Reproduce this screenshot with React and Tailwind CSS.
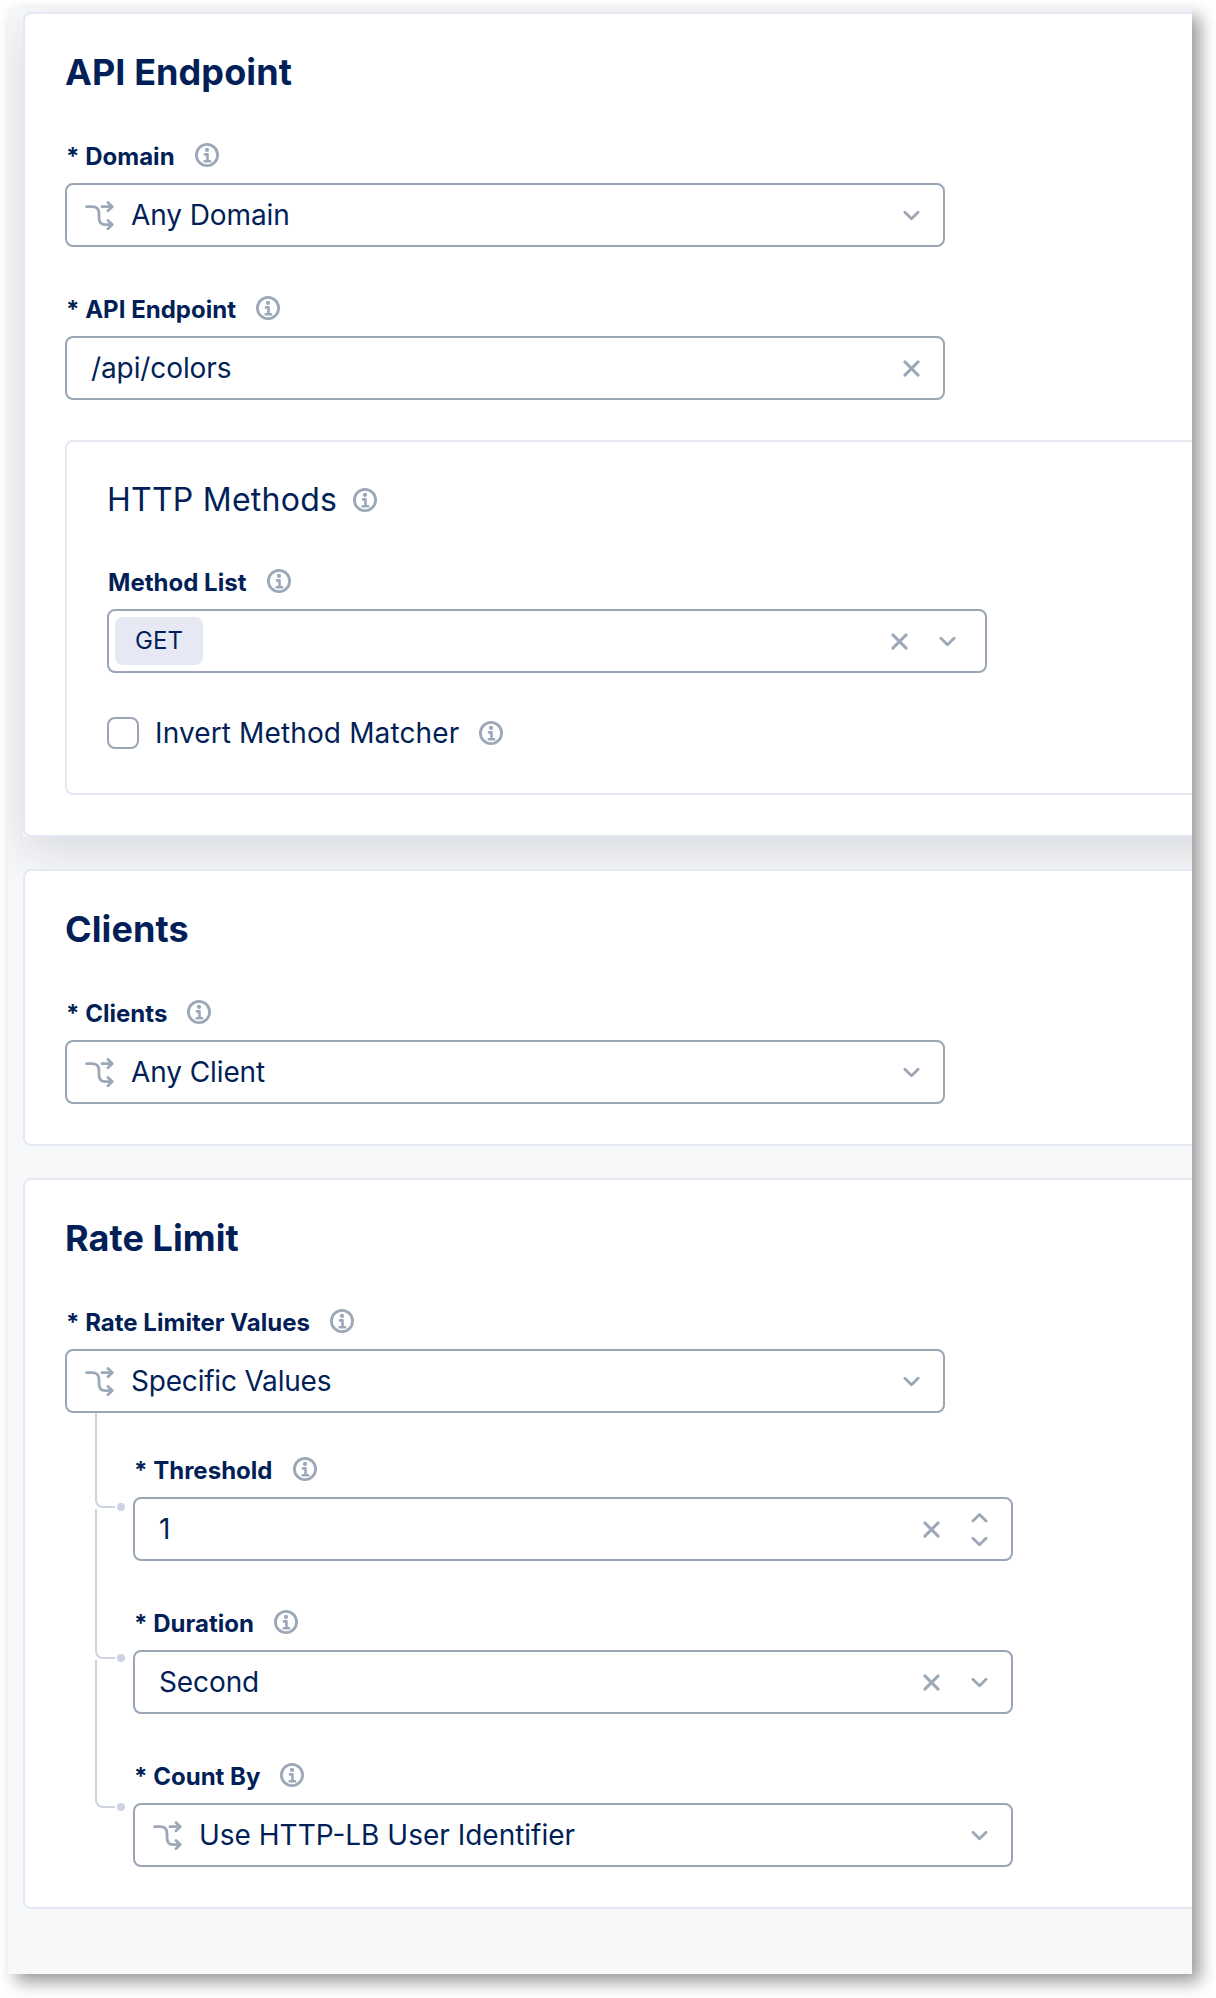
import React from "react";

function InfoIcon({ className = "" }) {
  return (
    <svg viewBox="0 0 24 24" fill="none" stroke="currentColor" className={`h-6 w-6 shrink-0 text-[#9ca8b7] ${className}`}>
      <circle cx="12" cy="12" r="10.6" strokeWidth="2.8" />
      <circle cx="12" cy="6.9" r="2.1" fill="currentColor" stroke="none" />
      <path d="M10 11.4h2.5v6.9M9.7 18.2h5.4" strokeWidth="2.6" strokeLinecap="round" strokeLinejoin="round" />
    </svg>
  );
}

function BranchIcon() {
  return (
    <svg
      viewBox="0 0 29 29"
      fill="none"
      stroke="currentColor"
      strokeWidth="2.8"
      strokeLinecap="round"
      strokeLinejoin="round"
      className="h-[29px] w-[29px] shrink-0 text-[#9ca8b7]"
    >
      <path d="M1.6 5.7h5.2c4.6 0 7.2 2.4 7.2 6.8v4.2c0 4.6 2 6.9 6.4 6.9h6.4" />
      <path d="M17 5.7h9.8" />
      <path d="M23 1.6l4.2 4.1L23 9.8" />
      <path d="M23 19.4l4.2 4.2L23 27.7" />
    </svg>
  );
}

function Chevron({ up = false }) {
  return (
    <svg
      viewBox="0 0 17 11"
      fill="none"
      stroke="currentColor"
      strokeWidth="2.8"
      strokeLinecap="round"
      strokeLinejoin="round"
      className="h-[11px] w-[17px] text-[#9ca8b7]"
    >
      <path d={up ? "M1.9 9L8.5 2.4L15.1 9" : "M1.9 2.2L8.5 8.8L15.1 2.2"} />
    </svg>
  );
}

function Clear() {
  return (
    <svg
      viewBox="0 0 17 17"
      fill="none"
      stroke="currentColor"
      strokeWidth="2.9"
      strokeLinecap="round"
      className="h-[17px] w-[17px] text-[#9ca8b7]"
    >
      <path d="M1.9 1.9L15.1 15.1M15.1 1.9L1.9 15.1" />
    </svg>
  );
}

function Label({ required, children }) {
  return (
    <div className="mb-[14px] flex h-[25px] items-end gap-[20px] pl-px text-[24px] leading-6 font-bold tracking-[0.02px]">
      <span className="whitespace-pre">{required ? "* " : ""}{children}</span>
      <InfoIcon className="mb-[2px]" />
    </div>
  );
}

function Control({ children, right, className = "pl-6" }) {
  return (
    <div
      className={`flex h-16 w-[880px] items-center justify-between rounded-lg border-2 border-[#9aa6b5] bg-white pr-[23px] text-[28px] leading-8 ${className}`}
    >
      <div className="flex items-center">{children}</div>
      <div className="flex items-center gap-[31px]">{right}</div>
    </div>
  );
}

function BranchSelect({ children, className = "tracking-[-0.1px]" }) {
  return (
    <Control className="pl-[18px]" right={<Chevron />}>
      <BranchIcon />
      <span className={`ml-[17px] ${className}`}>{children}</span>
    </Control>
  );
}

function Card({ title, children }) {
  return (
    <section className="rounded-lg border-2 border-[#e5e8f3] bg-white p-10">
      <h2 className="mb-[54px] text-[36px] leading-9 font-bold tracking-[0.08px]">{title}</h2>
      {children}
    </section>
  );
}

function Connector({ className }) {
  return (
    <div className={`flex items-end gap-[2px] ${className}`}>
      <div className="h-full w-5 rounded-bl-lg border-b-2 border-l-2 border-[#ced3e4]" />
      <div className="-mb-[3px] h-2 w-2 rounded-full bg-[#ced3e4]" />
    </div>
  );
}

export default function App() {
  return (
    <div className="h-[1998px] w-[1216px] overflow-hidden bg-white pt-2 pl-2 font-['Inter',sans-serif] text-[#021f57]">
      <div className="h-[1966px] w-[1184px] shadow-[8px_8px_16px_rgba(0,0,0,0.4)]">
        <main className="h-full w-full overflow-hidden bg-[#f7f8fa] pt-1 pl-[15px]">
          <div className="flex w-[1240px] flex-col gap-8">
            <div className="rounded-t-lg bg-[#f8f9fb] shadow-[0_16px_46px_rgba(10,20,45,0.13)]">
              <Card title="API Endpoint">
                <Label required>Domain</Label>
                <BranchSelect>Any Domain</BranchSelect>

                <div className="mt-[50px]">
                  <Label required>API Endpoint</Label>
                  <Control right={<Clear />}>
                    <span className="tracking-[-0.1px]">/api/colors</span>
                  </Control>
                </div>

                <div className="mt-10 rounded-lg border-2 border-[#e5e8f3] px-10 pt-10 pb-11">
                  <div className="flex h-9 items-center gap-4 text-[32px] leading-9 tracking-[0.25px]">
                    <h3>HTTP Methods</h3>
                    <InfoIcon />
                  </div>
                  <div className="mt-[52px]">
                    <Label>Method List</Label>
                    <Control
                      className="pr-[29px] pl-[6px]"
                      right={
                        <>
                          <Clear />
                          <Chevron />
                        </>
                      }
                    >
                      <span className="flex h-12 w-[88px] items-center justify-center rounded-lg bg-[#e6e8f3] text-[24px]">GET</span>
                    </Control>
                  </div>
                  <div className="mt-11 flex h-8 items-center text-[28px] leading-8">
                    <span className="h-8 w-8 rounded-lg border-2 border-[#9aa6b5] bg-white" />
                    <span className="mr-[20px] ml-4 tracking-[0.13px]">Invert Method Matcher</span>
                    <InfoIcon />
                  </div>
                </div>
              </Card>
            </div>

            <Card title="Clients">
              <Label required>Clients</Label>
              <BranchSelect>Any Client</BranchSelect>
            </Card>

            <Card title="Rate Limit">
              <Label required>Rate Limiter Values</Label>
              <BranchSelect className="tracking-[-0.2px]">Specific Values</BranchSelect>
              <div className="flex pl-[30px]">
                <div className="flex w-[38px] flex-col gap-px">
                  <Connector className="h-[95px]" />
                  <Connector className="h-[150px]" />
                  <Connector className="h-[148px]" />
                </div>
                <div className="flex flex-col gap-[50px] pt-[45px]">
                  <div>
                    <Label required>Threshold</Label>
                    <Control
                      right={
                        <>
                          <Clear />
                          <span className="flex flex-col gap-[13px]">
                            <Chevron up />
                            <Chevron />
                          </span>
                        </>
                      }
                    >
                      1
                    </Control>
                  </div>
                  <div>
                    <Label required>Duration</Label>
                    <Control
                      right={
                        <>
                          <Clear />
                          <Chevron />
                        </>
                      }
                    >
                      <span className="tracking-[-0.1px]">Second</span>
                    </Control>
                  </div>
                  <div>
                    <Label required>Count By</Label>
                    <BranchSelect className="tracking-normal">Use HTTP-LB User Identifier</BranchSelect>
                  </div>
                </div>
              </div>
            </Card>
          </div>
        </main>
      </div>
    </div>
  );
}
